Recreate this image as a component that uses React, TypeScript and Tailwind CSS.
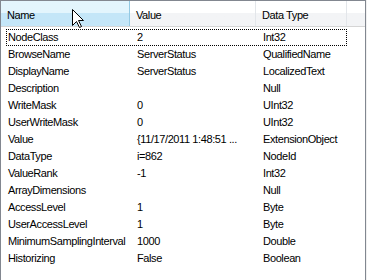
const rows: [string, string, string][] = [
  ['NodeClass', '2', 'Int32'],
  ['BrowseName', 'ServerStatus', 'QualifiedName'],
  ['DisplayName', 'ServerStatus', 'LocalizedText'],
  ['Description', '', 'Null'],
  ['WriteMask', '0', 'UInt32'],
  ['UserWriteMask', '0', 'UInt32'],
  ['Value', '{11/17/2011 1:48:51 ...', 'ExtensionObject'],
  ['DataType', 'i=862', 'NodeId'],
  ['ValueRank', '-1', 'Int32'],
  ['ArrayDimensions', '', 'Null'],
  ['AccessLevel', '1', 'Byte'],
  ['UserAccessLevel', '1', 'Byte'],
  ['MinimumSamplingInterval', '1000', 'Double'],
  ['Historizing', 'False', 'Boolean'],
];

function Cursor() {
  return (
    <svg className="absolute left-[72px] top-[9px]" width="13" height="20" viewBox="0 0 13 20">
      <path
        d="M0.5 0.5 L0.5 16.5 L4.5 12.5 L7.5 18.5 L9.5 17.5 L6.5 11.5 L11.5 11.5 Z"
        fill="#fff"
        stroke="#000"
        strokeWidth="1"
        strokeLinejoin="miter"
      />
    </svg>
  );
}

export default function App() {
  return (
    <div
      className="relative w-[367px] h-[280px] bg-[#f0f0f0] flex text-[11px] tracking-[-0.4px] text-black overflow-hidden"
      style={{ fontFamily: '"Liberation Sans", Arial, sans-serif' }}
    >
      <div className="w-[366px] h-full bg-white border-l border-t border-r border-[#828790] flex flex-col">
        {/* Header */}
        <div className="h-[26px] flex border-b border-[#d5d5d5] bg-gradient-to-b from-white from-50% to-[#f3f4f6] to-50%">
          <div className="w-[129px] flex items-center pt-[4px] pl-[6px] border-r border-[#93c9e3] bg-gradient-to-b from-[#e3f5fd] from-50% to-[#c4e6f8] to-50%">
            Name
          </div>
          <div className="w-[126px] flex items-center pt-[4px] pl-[6px] border-r border-[#e3e6ea]">Value</div>
          <div className="w-[91px] flex items-center pt-[4px] pl-[6px] border-r border-[#e3e6ea]">Data Type</div>
          <div className="flex-1" />
        </div>

        {/* Rows */}
        <div className="pt-[2px] flex flex-col">
          {rows.map(([name, value, type], i) => (
            <div
              key={name}
              className={`ml-[5px] w-[341px] h-[17px] flex items-center border ${
                i === 0 ? 'border-dotted border-black' : 'border-transparent'
              }`}
            >
              <div className="w-[129px] pl-[1px] whitespace-nowrap overflow-hidden">{name}</div>
              <div className="w-[126px] pl-[1px] whitespace-nowrap overflow-hidden">{value}</div>
              <div className="flex-1 pl-[1px] whitespace-nowrap overflow-hidden">{type}</div>
            </div>
          ))}
        </div>
      </div>
      <Cursor />
    </div>
  );
}
